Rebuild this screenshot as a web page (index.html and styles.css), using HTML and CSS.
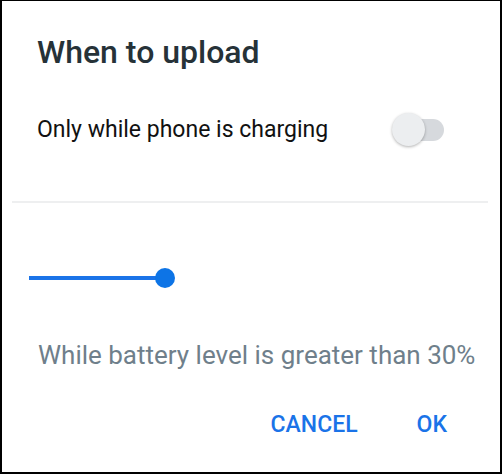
FILE: index.html
```html
<!DOCTYPE html>
<html>
<head>
	<meta charset="utf-8">
	<link rel="stylesheet" href="styles.css">
</head>
<body>
	<div class="dialog">
		<h1 class="titulo">When to upload</h1>
		<div class="fila">
			<span class="etiqueta">Only while phone is charging</span>
			<span class="switch"><span class="switch_thumb"></span></span>
		</div>
		<hr class="divisor">
		<div class="slider">
			<span class="slider_track"></span>
			<span class="slider_thumb"></span>
		</div>
		<p class="nivel">While battery level is greater than 30%</p>
		<div class="botones">
			<span class="boton">CANCEL</span>
			<span class="boton">OK</span>
		</div>
	</div>
</body>
</html>
```
FILE: styles.css
```css
body {
	margin: 0;
	font-family: Roboto, "Liberation Sans", sans-serif;
	background: #fff;
}

.dialog {
	width: 502px;
	height: 474px;
	box-sizing: border-box;
	border: 2px solid #000;
	border-top-width: 1px;
	display: flex;
	flex-direction: column;
}

.titulo {
	margin: 0;
	padding: 32px 0 0 35px;
	font-size: 32px;
	line-height: 38px;
	font-weight: 500;
	color: #263238;
}

.fila {
	display: flex;
	align-items: center;
	justify-content: space-between;
	margin-top: 39px;
	padding: 0 56px 0 35px;
	height: 40px;
}

.etiqueta {
	font-size: 23px;
	line-height: 40px;
	color: #111;
}

.switch {
	position: relative;
	width: 51px;
	height: 22px;
	border-radius: 11px;
	background: #d6d9dd;
}

.switch_thumb {
	position: absolute;
	left: -1px;
	top: -6px;
	width: 33px;
	height: 33px;
	border-radius: 50%;
	background: #eceef0;
	box-shadow: 0 1px 3px rgba(0, 0, 0, 0.3);
}

.divisor {
	margin: 51px 12px 0 10px;
	border: 0;
	border-top: 2px solid #eeeff0;
}

.slider {
	position: relative;
	margin: 65px 0 0 27px;
	width: 148px;
	height: 20px;
}

.slider_track {
	position: absolute;
	left: 0;
	top: 8px;
	width: 136px;
	height: 4px;
	background: #1a73e8;
}

.slider_thumb {
	position: absolute;
	left: 126px;
	top: 0;
	width: 20px;
	height: 20px;
	border-radius: 50%;
	background: #0d74e6;
}

.nivel {
	margin: 52px 0 0 36px;
	font-size: 26px;
	line-height: 30px;
	color: #6f7f8b;
}

.botones {
	display: flex;
	justify-content: flex-end;
	gap: 59px;
	padding: 41px 53px 0 0;
}

.boton {
	font-size: 23px;
	line-height: 28px;
	font-weight: 500;
	color: #1a73e8;
}
```
